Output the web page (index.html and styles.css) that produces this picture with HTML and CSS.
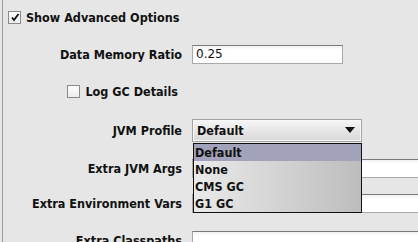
FILE: index.html
```html
<!DOCTYPE html>
<html>
<head>
  <title>Advanced Options</title>
  <link rel="stylesheet" href="styles.css">
</head>
<body>

<div class="panel">
  <label class="check top-check">
    <span class="box"><svg width="10" height="10" viewBox="0 0 10 10"><path d="M2 5.5 L4 8 L8.5 2" fill="none" stroke="#111" stroke-width="1.8"/></svg></span>
    Show Advanced Options
  </label>

  <div class="form">
    <div class="label">Data Memory Ratio</div>
    <div class="cell"><div class="field short">0.25</div></div>

    <div class="label"><label class="check"><span class="box"></span>Log GC Details</label></div>
    <div class="cell"></div>

    <div class="label">JVM Profile</div>
    <div class="cell">
      <div class="combo">
        <span>Default</span>
        <span class="arrow"></span>
      </div>
    </div>

    <div class="label">Extra JVM Args</div>
    <div class="cell"><div class="field wide"></div></div>

    <div class="label">Extra Environment Vars</div>
    <div class="cell"><div class="field wide"></div></div>

    <div class="label">Extra Classpaths</div>
    <div class="cell"><div class="field wide"></div></div>
  </div>

  <ul class="popup">
    <li class="selected">Default</li>
    <li>None</li>
    <li>CMS GC</li>
    <li>G1 GC</li>
  </ul>
</div>

</body>
</html>
```

FILE: styles.css
```css
body {
  margin: 0;
  background: #e6e6e6;
  font-family: "DejaVu Sans Condensed", "DejaVu Sans", sans-serif;
  font-size: 12.5px;
  font-weight: bold;
  color: #111;
  height: 242px;
  overflow: hidden;
}
.panel {
  position: relative;
  margin-left: 2px;
  border-left: 1px solid #9c9c9c;
  height: 242px;
  overflow: hidden;
}
.check {
  display: flex;
  align-items: center;
  gap: 5px;
}
.top-check {
  padding: 10px 0 0 5px;
  height: 14px;
}
.box {
  width: 11px;
  height: 11px;
  border: 1px solid #8a8a8a;
  background: linear-gradient(#ffffff, #ececec);
  display: flex;
  align-items: center;
  justify-content: center;
}
.form {
  display: grid;
  grid-template-columns: 179px 1fr;
  grid-template-rows: 38px 36px 42px 34px 36px 38px;
  column-gap: 10px;
  margin-top: 11px;
  align-items: center;
}
.label {
  text-align: right;
  white-space: nowrap;
}
.label .check {
  justify-content: flex-end;
  padding-right: 4px;
}
.cell {
  display: flex;
  align-items: center;
}
.field {
  box-sizing: border-box;
  height: 19px;
  border: 1px solid #a8a8a8;
  border-top-color: #7a7a7a;
  background: linear-gradient(#f2f2f2, #ffffff 4px);
  font-family: "DejaVu Sans", sans-serif;
  font-size: 12px;
  font-weight: normal;
  padding: 1px 3px;
  line-height: 15px;
}
.field.short {
  width: 151px;
}
.field.wide {
  width: 240px;
}
.combo {
  box-sizing: border-box;
  width: 170px;
  height: 23px;
  border: 1px solid #a3a3a3;
  box-shadow: inset 0 0 0 1px #f8f8f8;
  background: linear-gradient(#f6f6f6, #d8d8d8);
  display: flex;
  align-items: center;
  justify-content: space-between;
  padding: 0 6px 0 4px;
}
.arrow {
  width: 0;
  height: 0;
  border-left: 5px solid transparent;
  border-right: 5px solid transparent;
  border-top: 6px solid #111;
}
.popup {
  position: absolute;
  left: 190px;
  top: 143px;
  width: 167px;
  margin: 0;
  padding: 0;
  list-style: none;
  border: 1px solid #111;
  background: linear-gradient(to right, #eaeaea, #bdbdbd);
}
.popup li {
  height: 17px;
  line-height: 17px;
  padding-left: 1px;
}
.popup li.selected {
  background: #a2a2ba;
}
```
